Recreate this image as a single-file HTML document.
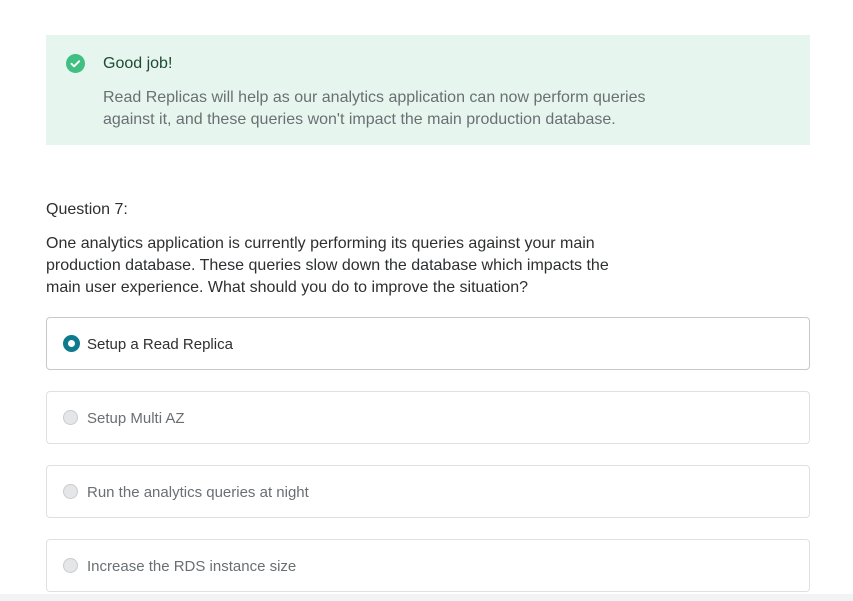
<!DOCTYPE html>
<html><head><style>
body{margin:0;width:853px;height:601px;background:#fff;font-family:"Liberation Sans",sans-serif;position:relative;overflow:hidden}
.alert{position:absolute;left:46px;top:35px;width:764px;height:110px;background:#e6f6ef}
.ic{position:absolute;left:66px;top:54px;width:19px;height:19px;border-radius:50%;background:#3fbf82}
.t1{position:absolute;left:103px;top:55px;font-size:16px;color:#1d4a32}
.t2{position:absolute;left:103px;top:87px;font-size:16px;line-height:22px;color:#6a6f73}
.q{position:absolute;left:46px;top:201px;font-size:16px;color:#2d2f31}
.p{position:absolute;left:46px;top:233px;font-size:16px;line-height:22px;color:#2d2f31}
.o{position:absolute;left:46px;width:762px;height:51px;border:1px solid #dde1e4;border-radius:4px;box-sizing:content-box}
.o span{position:absolute;left:40px;top:18px;font-size:15px;color:#6a6f73}
.r{position:absolute;left:16px;top:18px;width:15px;height:15px;border-radius:50%;background:#e4e6e8;border:1px solid #c8ccd0;box-sizing:border-box}
.sel{border-color:#c5c9cc}
.sel span{color:#2d2f31}
.sel .r{background:#fff;border:5px solid #0e7a8e;width:17px;height:17px;left:16px;top:17px}
.foot{position:absolute;left:0;top:594px;width:853px;height:7px;background:#f2f3f4}
</style></head><body>
<div class="alert"></div>
<div class="ic"><svg width="19" height="19" viewBox="0 0 19 19"><path d="M5.5 9.8l2.6 2.5 5-5" stroke="#fff" stroke-width="2" fill="none" stroke-linecap="round" stroke-linejoin="round"/></svg></div>
<div class="t1">Good job!</div>
<div class="t2">Read Replicas will help as our analytics application can now perform queries<br>against it, and these queries won't impact the main production database.</div>
<div class="q">Question 7:</div>
<div class="p">One analytics application is currently performing its queries against your main<br>production database. These queries slow down the database which impacts the<br>main user experience. What should you do to improve the situation?</div>
<div class="o sel" style="top:317px"><div class="r"></div><span>Setup a Read Replica</span></div>
<div class="o" style="top:391px"><div class="r"></div><span>Setup Multi AZ</span></div>
<div class="o" style="top:465px"><div class="r"></div><span>Run the analytics queries at night</span></div>
<div class="o" style="top:539px"><div class="r"></div><span>Increase the RDS instance size</span></div>
<div class="foot"></div>
</body></html>
